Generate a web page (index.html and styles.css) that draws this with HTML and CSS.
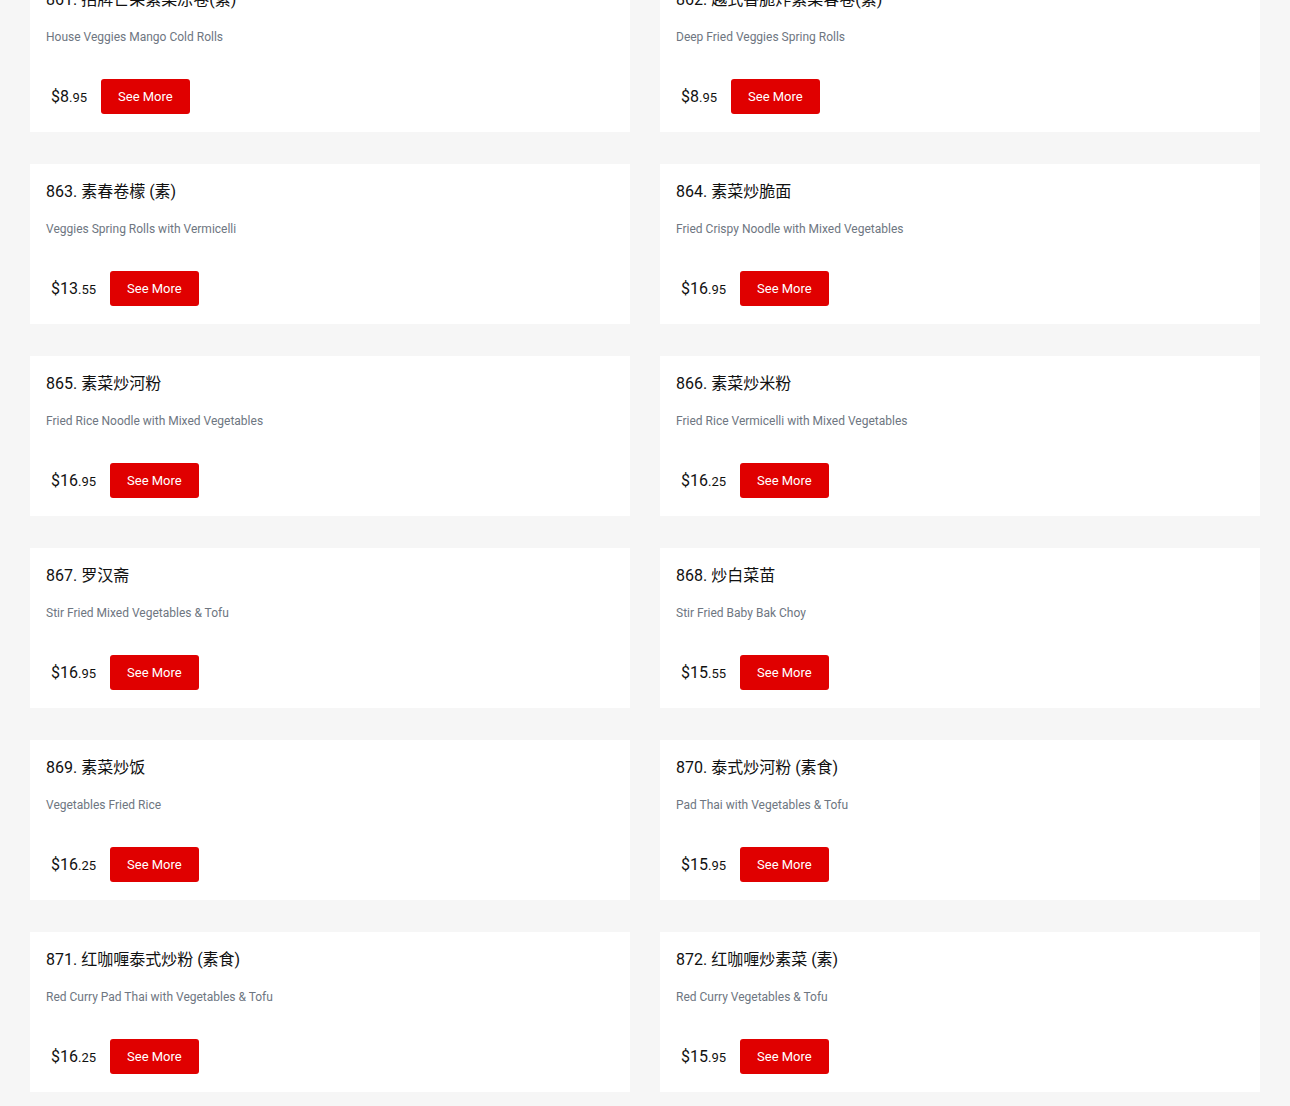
FILE: index.html
```html
<!DOCTYPE html>
<html lang="zh">
<head>
<meta charset="utf-8">
<title>Menu</title>
<link rel="stylesheet" href="styles.css">
</head>
<body>
<main class="menu-grid">
  <article class="card">
    <h3 class="card-title">861. 招牌芒果素菜凉卷(素)</h3>
    <p class="card-desc">House Veggies Mango Cold Rolls</p>
    <div class="card-foot"><span class="price">$8<small>.95</small></span><button class="btn">See More</button></div>
  </article>
  <article class="card">
    <h3 class="card-title">862. 越式香脆炸素菜春卷(素)</h3>
    <p class="card-desc">Deep Fried Veggies Spring Rolls</p>
    <div class="card-foot"><span class="price">$8<small>.95</small></span><button class="btn">See More</button></div>
  </article>
  <article class="card">
    <h3 class="card-title">863. 素春卷檬 (素)</h3>
    <p class="card-desc">Veggies Spring Rolls with Vermicelli</p>
    <div class="card-foot"><span class="price">$13<small>.55</small></span><button class="btn">See More</button></div>
  </article>
  <article class="card">
    <h3 class="card-title">864. 素菜炒脆面</h3>
    <p class="card-desc">Fried Crispy Noodle with Mixed Vegetables</p>
    <div class="card-foot"><span class="price">$16<small>.95</small></span><button class="btn">See More</button></div>
  </article>
  <article class="card">
    <h3 class="card-title">865. 素菜炒河粉</h3>
    <p class="card-desc">Fried Rice Noodle with Mixed Vegetables</p>
    <div class="card-foot"><span class="price">$16<small>.95</small></span><button class="btn">See More</button></div>
  </article>
  <article class="card">
    <h3 class="card-title">866. 素菜炒米粉</h3>
    <p class="card-desc">Fried Rice Vermicelli with Mixed Vegetables</p>
    <div class="card-foot"><span class="price">$16<small>.25</small></span><button class="btn">See More</button></div>
  </article>
  <article class="card">
    <h3 class="card-title">867. 罗汉斋</h3>
    <p class="card-desc">Stir Fried Mixed Vegetables &amp; Tofu</p>
    <div class="card-foot"><span class="price">$16<small>.95</small></span><button class="btn">See More</button></div>
  </article>
  <article class="card">
    <h3 class="card-title">868. 炒白菜苗</h3>
    <p class="card-desc">Stir Fried Baby Bak Choy</p>
    <div class="card-foot"><span class="price">$15<small>.55</small></span><button class="btn">See More</button></div>
  </article>
  <article class="card">
    <h3 class="card-title">869. 素菜炒饭</h3>
    <p class="card-desc">Vegetables Fried Rice</p>
    <div class="card-foot"><span class="price">$16<small>.25</small></span><button class="btn">See More</button></div>
  </article>
  <article class="card">
    <h3 class="card-title">870. 泰式炒河粉 (素食)</h3>
    <p class="card-desc">Pad Thai with Vegetables &amp; Tofu</p>
    <div class="card-foot"><span class="price">$15<small>.95</small></span><button class="btn">See More</button></div>
  </article>
  <article class="card">
    <h3 class="card-title">871. 红咖喱泰式炒粉 (素食)</h3>
    <p class="card-desc">Red Curry Pad Thai with Vegetables &amp; Tofu</p>
    <div class="card-foot"><span class="price">$16<small>.25</small></span><button class="btn">See More</button></div>
  </article>
  <article class="card">
    <h3 class="card-title">872. 红咖喱炒素菜 (素)</h3>
    <p class="card-desc">Red Curry Vegetables &amp; Tofu</p>
    <div class="card-foot"><span class="price">$15<small>.95</small></span><button class="btn">See More</button></div>
  </article>
</main>
</body>
</html>
```

FILE: styles.css
```css
html, body {
  margin: 0;
  padding: 0;
  background: #f6f6f6;
  font-family: Roboto, "Noto Sans CJK SC", sans-serif;
  color: #111111;
}

.menu-grid {
  display: grid;
  grid-template-columns: 600px 600px;
  column-gap: 30px;
  row-gap: 32px;
  padding: 0 30px;
  margin-top: -28px;
}

.card {
  background: #ffffff;
  height: 160px;
  box-sizing: border-box;
  padding: 19px 16px 18px;
  display: flex;
  flex-direction: column;
}

.card-title {
  margin: 0;
  font-size: 16px;
  line-height: 18px;
  font-weight: 400;
  color: #111111;
}

.card-desc {
  margin: 21px 0 0;
  font-size: 12px;
  line-height: 14px;
  color: #6e7681;
}

.card-foot {
  margin-top: auto;
  display: flex;
  align-items: center;
  gap: 9px;
}

.price {
  padding: 0 5px;
  font-size: 16px;
  color: #111111;
}

.price small {
  font-size: 13px;
}

.btn {
  height: 35px;
  padding: 0 17px;
  border: none;
  border-radius: 3px;
  background: #e00000;
  color: #ffffff;
  font-family: Roboto, sans-serif;
  font-size: 13px;
  cursor: pointer;
}
```
